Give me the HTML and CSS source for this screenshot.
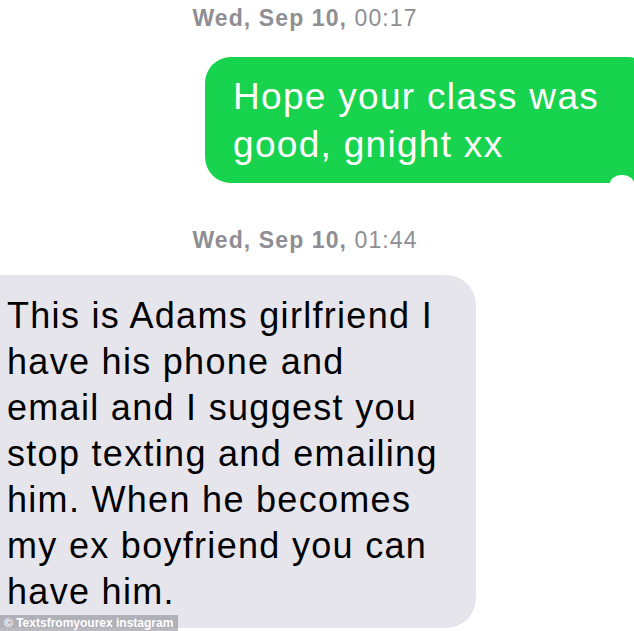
FILE: index.html
```html
<!DOCTYPE html>
<html lang="en">
<head>
    <meta charset="UTF-8">
    <meta name="viewport" content="width=device-width, initial-scale=1.0">
    <title>Messages</title>
    <link rel="stylesheet" href="styles.css">
</head>
<body>

<div class="thread">
    <div class="stamp stamp-first"><b>Wed, Sep 10,</b> 00:17</div>
    <div class="row sent">
        <div class="bubble green">Hope your class was<br>good, gnight xx</div>
    </div>

    <div class="stamp stamp-second"><b>Wed, Sep 10,</b> 01:44</div>
    <div class="row received">
        <div class="bubble gray">This is Adams girlfriend I<br>have his phone and<br>email and I suggest you<br>stop texting and emailing<br>him. When he becomes<br>my ex boyfriend you can<br>have him.</div>
    </div>
</div>

<div class="credit">&copy; Textsfromyourex instagram</div>

</body>
</html>
```

FILE: styles.css
```css
body {
    margin: 0;
    padding: 0;
    background-color: #fff;
    font-family: "Liberation Sans", Arial, sans-serif;
    width: 634px;
    height: 631px;
    overflow: hidden;
    position: relative;
}
.thread {
    display: flex;
    flex-direction: column;
}
.stamp {
    color: #8e8e93;
    font-size: 23px;
    line-height: 26px;
    letter-spacing: 1.1px;
    text-align: center;
    padding-right: 24px;
}
.stamp b {
    font-weight: bold;
}
.stamp-first {
    padding-top: 5px;
}
.stamp-second {
    margin-top: 44px;
}
.row {
    display: flex;
}
.bubble {
    position: relative;
}
.sent {
    margin-top: 26px;
    margin-left: 205px;
    margin-right: -20px;
}
.green {
    flex: 1;
    background-color: #17d34d;
    color: #fff;
    font-size: 37px;
    line-height: 48px;
    letter-spacing: 1.3px;
    border-radius: 26px;
    padding: 16px 0 14px 28px;
}
.green::after {
    content: "";
    position: absolute;
    right: 20px;
    bottom: -9px;
    width: 24px;
    height: 17px;
    background-color: #fff;
    border-radius: 50%;
}
.received {
    margin-top: 22px;
    margin-left: -30px;
}
.gray {
    width: 469px;
    background-color: #e6e5eb;
    color: #000;
    font-size: 36px;
    line-height: 46px;
    letter-spacing: 1.3px;
    border-radius: 30px;
    padding: 18px 0 13px 37px;
}
.credit {
    position: absolute;
    left: 0;
    bottom: 0;
    height: 16px;
    line-height: 16px;
    padding: 0 5px 0 4px;
    background-color: rgba(140, 140, 150, 0.6);
    color: #fff;
    font-size: 12px;
    font-weight: bold;
}
```
